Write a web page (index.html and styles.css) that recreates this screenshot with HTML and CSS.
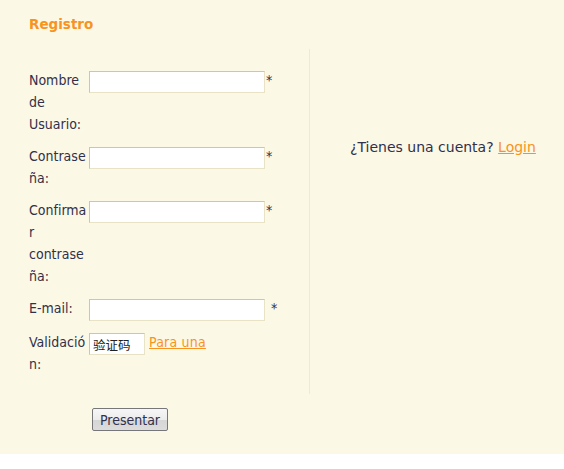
FILE: index.html
```html
<!DOCTYPE html>
<html lang="es">
<head>
<meta charset="utf-8">
<title>Registro</title>
<link rel="stylesheet" href="styles.css">
</head>
<body>
<div class="page">
  <h2 class="title">Registro</h2>
  <div class="panel">
    <form class="form-col">
      <div class="row">
        <label class="label">Nombre de Usuario:</label>
        <div class="field"><input class="input" type="text"><span class="req">*</span></div>
      </div>
      <div class="row">
        <label class="label">Contraseña:</label>
        <div class="field"><input class="input" type="password"><span class="req">*</span></div>
      </div>
      <div class="row">
        <label class="label">Confirmar contraseña:</label>
        <div class="field"><input class="input" type="password"><span class="req">*</span></div>
      </div>
      <div class="row">
        <label class="label">E-mail:</label>
        <div class="field"><input class="input" type="text"><span class="req req-space">*</span></div>
      </div>
      <div class="row">
        <label class="label">Validación:</label>
        <div class="field"><input class="input input-code" type="text" value="验证码"><a class="link refresh" href="#">Para una</a></div>
      </div>
    </form>
    <div class="side">
      <p class="side-text">¿Tienes una cuenta? <a class="link" href="#">Login</a></p>
    </div>
  </div>
  <div class="actions">
    <button class="button" type="button">Presentar</button>
  </div>
</div>
</body>
</html>
```
FILE: styles.css
```css
html, body {
  margin: 0;
  padding: 0;
  background: #ffffff;
}

.page {
  background: #fcf8e6;
  padding: 14px 0 23px 29px;
  font-family: "DejaVu Sans Condensed", "DejaVu Sans", sans-serif;
  font-stretch: condensed;
  font-size: 14px;
  color: #30304a;
}

.title {
  margin: 0;
  font-family: "DejaVu Sans", sans-serif;
  font-stretch: normal;
  font-size: 13.5px;
  line-height: 21px;
  font-weight: bold;
  color: #f7931e;
}

.panel {
  display: flex;
  margin-top: 14px;
}

.form-col {
  width: 280px;
  border-right: 1px solid #f1ead0;
  padding: 20px 0 19px 0;
  display: flex;
  flex-direction: column;
  gap: 10px;
  margin: 0;
}

.row {
  display: flex;
  align-items: flex-start;
  line-height: 22px;
}

.label {
  width: 60px;
  flex: none;
  overflow-wrap: break-word;
}

.field {
  display: flex;
  align-items: flex-start;
}

.input {
  box-sizing: border-box;
  width: 176px;
  height: 22px;
  margin: 2px 0 0 0;
  padding: 0 3px;
  border: 1px solid;
  border-color: #cdc6a9 #e9e3c6 #e9e3c6 #cdc6a9;
  background: #ffffff;
  font-family: "DejaVu Sans", "Noto Sans CJK SC", sans-serif;
  font-size: 12px;
  color: #333;
  outline: none;
}

.input-code {
  width: 56px;
  font-family: "Noto Sans CJK SC", sans-serif;
  font-size: 12.5px;
  color: #222;
}

.req {
  line-height: 22px;
  margin-left: 1px;
}

.req-space {
  margin-left: 6px;
}

.link {
  color: #f7931e;
  text-decoration: underline;
}

.refresh {
  margin-left: 4px;
  line-height: 22px;
  letter-spacing: 0.2px;
}

.side {
  flex: 1;
  padding: 87px 0 0 40px;
  font-family: "DejaVu Sans", sans-serif;
  font-stretch: normal;
  font-size: 14px;
  line-height: 22px;
}

.side-text {
  margin: 0;
}

.actions {
  padding: 14px 0 0 63px;
}

.button {
  box-sizing: border-box;
  width: 76px;
  height: 23px;
  padding: 0;
  border: 1px solid #77777a;
  border-radius: 2px;
  background: linear-gradient(#f6f6f6 0%, #ececec 50%, #d6d6d6 51%, #dcdcdc 100%);
  font-family: "DejaVu Sans Condensed", "DejaVu Sans", sans-serif;
  font-stretch: condensed;
  font-size: 14px;
  color: #30304a;
  display: block;
}
```
